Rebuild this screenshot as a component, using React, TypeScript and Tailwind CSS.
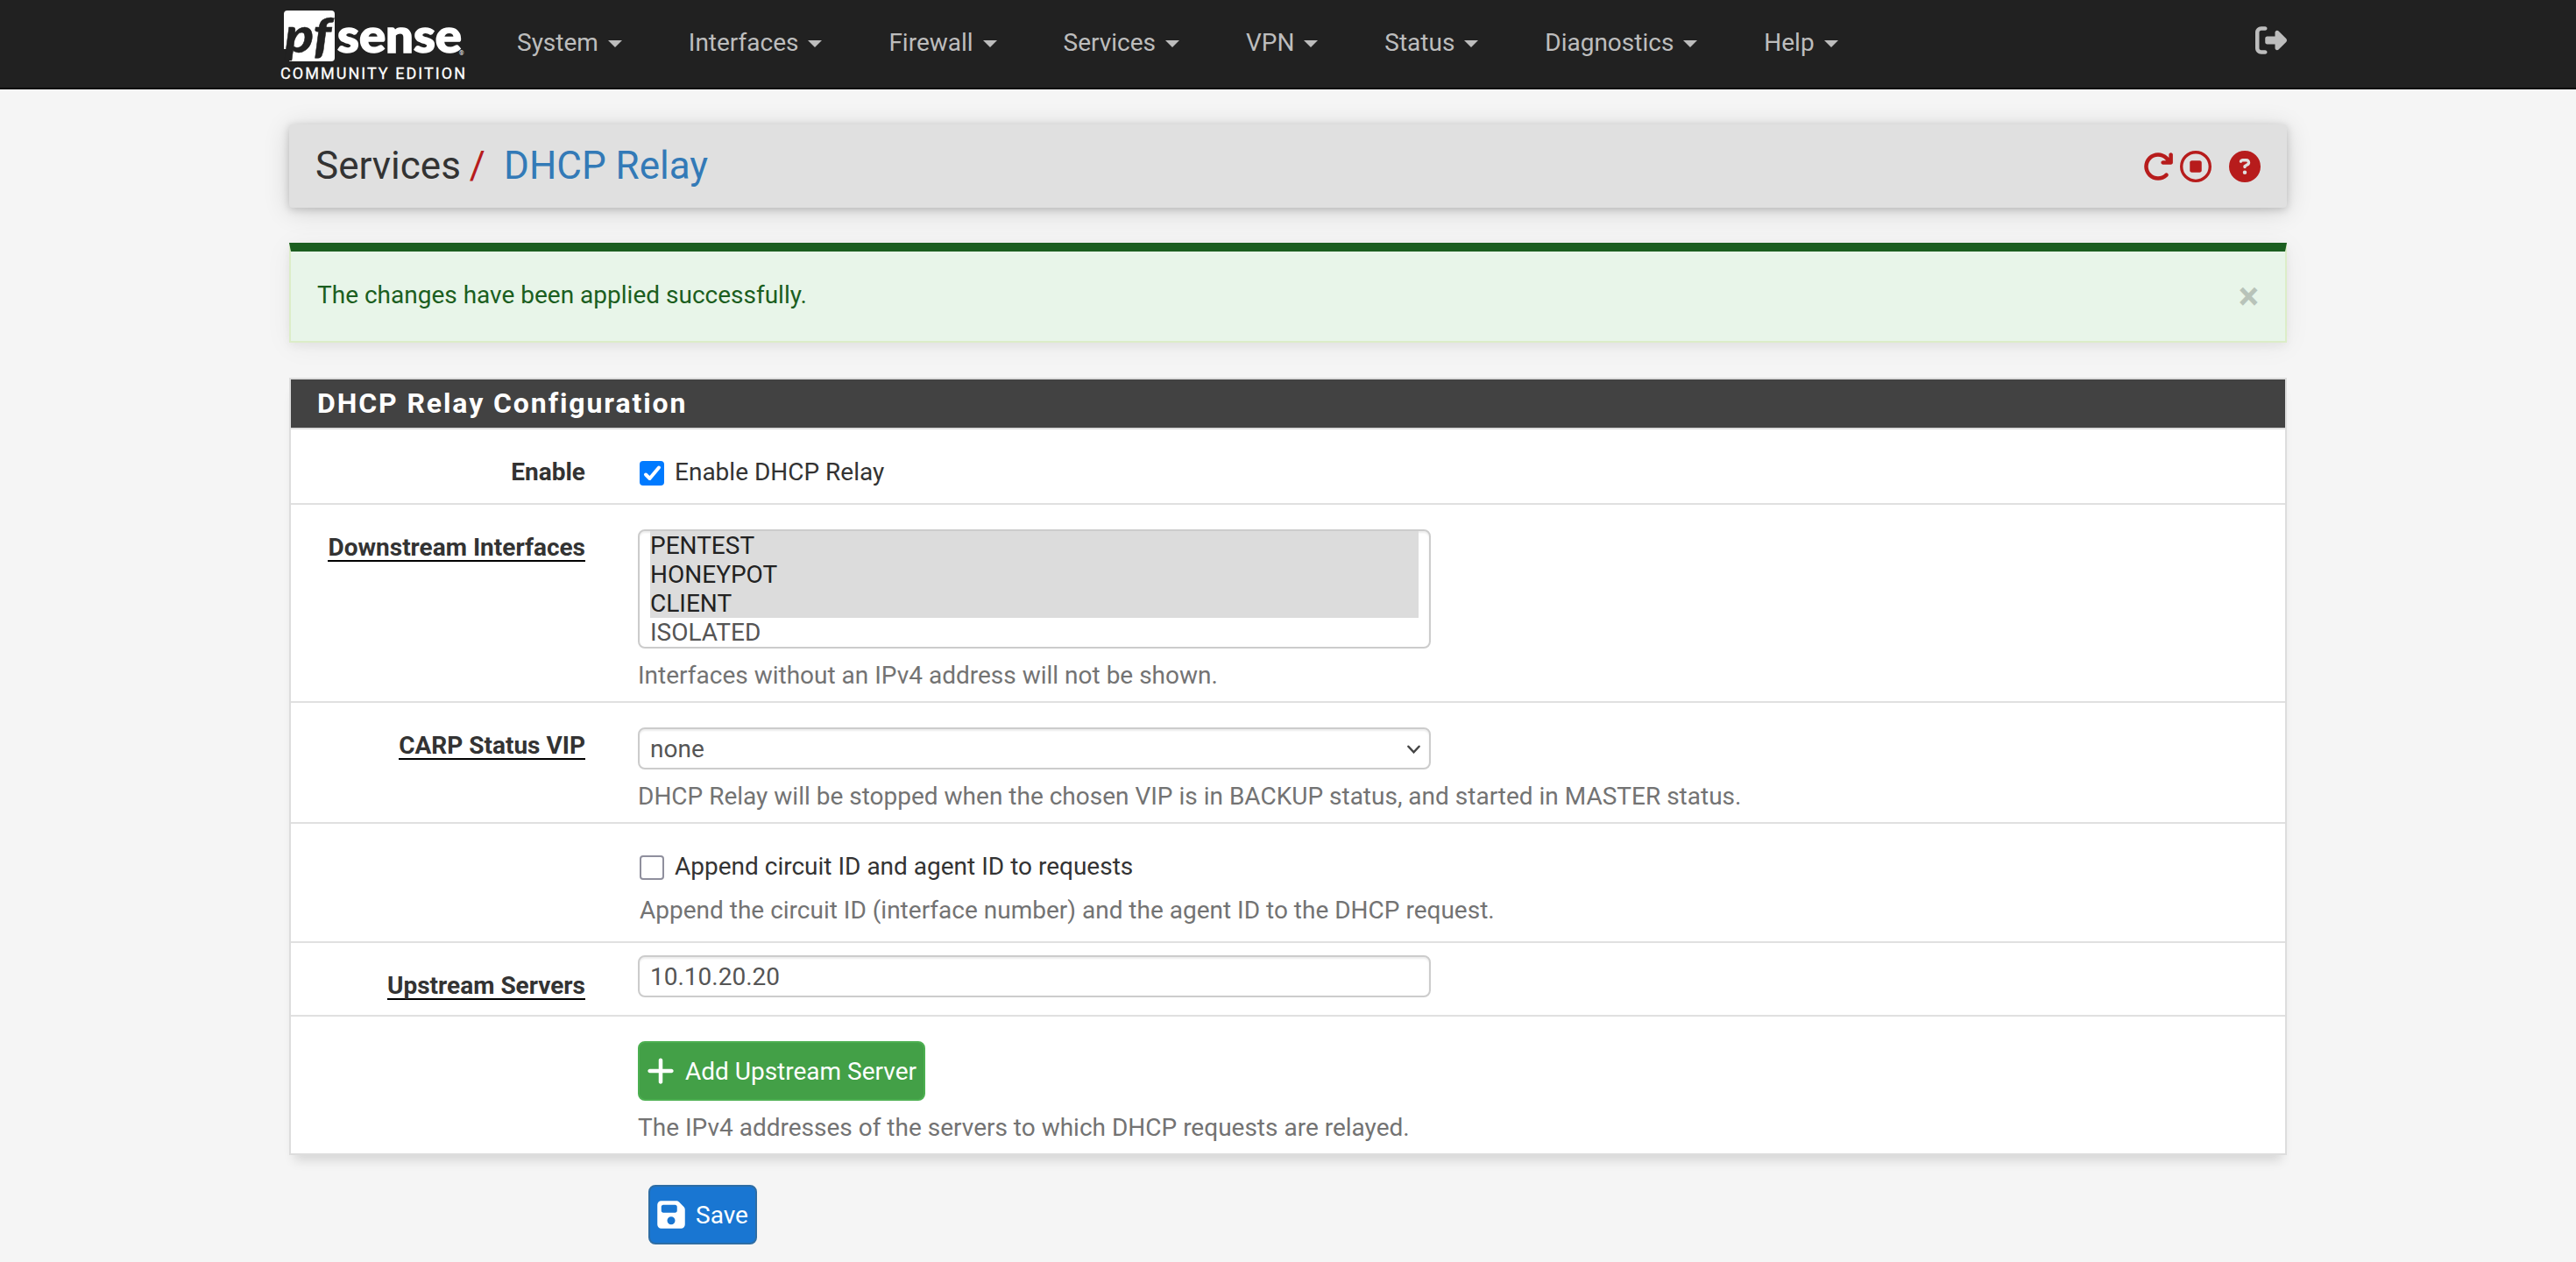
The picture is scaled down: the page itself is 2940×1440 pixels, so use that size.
import type { ReactNode } from "react";
import {
  FaArrowRotateRight,
  FaCircleQuestion,
  FaFloppyDisk,
  FaPlus,
  FaRegCircleStop,
  FaRightFromBracket,
} from "react-icons/fa6";

const menus = ["System", "Interfaces", "Firewall", "Services", "VPN", "Status", "Diagnostics", "Help"];

const interfaces = [
  { name: "PENTEST", selected: true },
  { name: "HONEYPOT", selected: true },
  { name: "CLIENT", selected: true },
  { name: "ISOLATED", selected: false },
];

const Logo = () => (
  <svg width="230" height="100" viewBox="310 0 230 100" className="block shrink-0">
    <path d="M328 12H378Q382 12 382 16V66Q382 70 378 70H330L334 56H324V16Q324 12 328 12Z" fill="#fff" />
    <text x="325" y="59.5" fontFamily="Lato" fontWeight="900" fontStyle="italic" fontSize="56" textLength="53" lengthAdjust="spacingAndGlyphs" fill="#212121" stroke="#212121" strokeWidth="0.5">
      pf
    </text>
    <text x="385" y="59.5" fontFamily="Lato" fontWeight="900" fontSize="54" textLength="142" lengthAdjust="spacingAndGlyphs" fill="#fff" stroke="#fff" strokeWidth="1.6">
      sense
    </text>
    <text x="524" y="63" fontFamily="Roboto" fontSize="7" fill="#fff">
      ®
    </text>
    <text x="320" y="90" fontFamily="Roboto" fontSize="18" textLength="211" fill="#fff" stroke="#fff" strokeWidth="0.3">
      COMMUNITY EDITION
    </text>
  </svg>
);

const Navbar = () => (
  <nav className="h-[102px] bg-[#212121] border-b-2 border-[#080808]">
    <div className="w-[2300px] h-[100px] mx-auto -translate-x-[10px] flex">
      <Logo />
      <ul className="flex ml-[50px] pt-[29px] gap-[75.9px] text-[#bdbdbd]">
        {menus.map((menu) => (
          <li key={menu} className="flex h-10 leading-10">
            {menu}
            <span className="ml-[11px] mt-[17px] w-0 h-0 border-x-8 border-t-8 border-x-transparent border-t-[#bdbdbd]" />
          </li>
        ))}
      </ul>
      <FaRightFromBracket className="ml-auto mt-[28px] size-9 text-[#bdbdbd]" />
    </div>
  </nav>
);

const Label = ({ children, required }: { children?: ReactNode; required?: boolean }) => (
  <div className="w-[336px] mr-[60px] pt-[29px] flex justify-end shrink-0 font-bold leading-10">
    {required ? <span className="h-9 border-b-2 border-black">{children}</span> : children}
  </div>
);

const Help = ({ children }: { children: ReactNode }) => <p className="mt-[11px] leading-10 text-[#737373]">{children}</p>;

const control = "w-[905px] border-2 border-[#ccc] rounded-lg bg-white px-3 text-[#555] shadow-[inset_0_2px_2px_rgba(0,0,0,0.075)]";

const App = () => {
  return (
    <div className="h-[1440px] overflow-hidden bg-[#f5f5f5] text-[28px] text-[#333] font-['Roboto',sans-serif]">
      <Navbar />
      <main className="w-[2280px] mx-auto">
        <header className="mt-10 h-[95px] pl-[30px] pr-[30px] flex items-center bg-[#e0e0e0] rounded-[4px] shadow-[0_2px_10px_rgba(0,0,0,0.18),0_4px_30px_rgba(0,0,0,0.14)]">
          <h1 className="-mt-0.5 text-[44px] leading-[60px] flex">
            <span>Services</span>
            <span className="ml-[10px] text-[#b71c1c]">/</span>
            <span className="ml-[21px] text-[#337ab7]">DHCP Relay</span>
          </h1>
          <div className="ml-auto mt-px flex text-[#b71c1c]">
            <FaArrowRotateRight className="size-9" />
            <FaRegCircleStop className="size-9 ml-[7px]" />
            <FaCircleQuestion className="size-9 ml-5" />
          </div>
        </header>

        <div className="mt-10 h-[114px] flex border-2 border-t-[10px] border-[#dcedc8] border-t-[#1b5e20] bg-[#e8f5e9] px-[30px] pt-[30px] leading-10 text-[#1b5e20] shadow-[0_4px_10px_rgba(0,0,0,0.05),0_4px_30px_rgba(0,0,0,0.05)]">
          The changes have been applied successfully.
          <button className="ml-auto h-[42px] text-[44px] leading-[41px] font-bold text-black opacity-20">×</button>
        </div>

        <section className="mt-10 border-2 border-[#ddd] bg-white shadow-[0_12px_12px_-6px_rgba(0,0,0,0.13)]">
          <h2 className="h-[57px] pl-[30px] leading-[55px] bg-[#424242] border-b-2 border-[#ddd] text-[32px] font-bold tracking-[1.9px] text-white">
            DHCP Relay Configuration
          </h2>

          <div className="flex h-[86px] border-b-2 border-[#e0e0e0]">
            <Label>Enable</Label>
            <label className="flex pt-[29px] leading-10">
              <span className="mt-[7px] ml-0.5 mr-3 size-7 rounded-[4px] bg-[#007aff]">
                <svg viewBox="0 0 28 28" className="size-7 fill-none stroke-white stroke-4">
                  <path d="M7 15.5L11.5 20L22 7.5" strokeLinecap="round" strokeLinejoin="round" />
                </svg>
              </span>
              Enable DHCP Relay
            </label>
          </div>

          <div className="flex h-[226px] border-b-2 border-[#e0e0e0]">
            <Label required>Downstream Interfaces</Label>
            <div className="pt-7">
              <ul className={`${control} h-[136px] leading-[33px]`}>
                {interfaces.map((item) => (
                  <li key={item.name} className={item.selected ? "bg-[#dcdcdc] text-[#222]" : ""}>
                    {item.name}
                  </li>
                ))}
              </ul>
              <Help>Interfaces without an IPv4 address will not be shown.</Help>
            </div>
          </div>

          <div className="flex h-[138px] border-b-2 border-[#e0e0e0]">
            <Label required>CARP Status VIP</Label>
            <div className="pt-7">
              <div className={`${control} h-12 leading-[46px] flex justify-between`}>
                none
                <svg viewBox="0 0 16 10" className="w-[15px] h-[10px] mt-[18px] -mr-0.5 fill-none stroke-[#444]">
                  <path d="M1.5 1.5L8 8.5L14.5 1.5" strokeWidth="2.6" strokeLinecap="round" />
                </svg>
              </div>
              <Help>DHCP Relay will be stopped when the chosen VIP is in BACKUP status, and started in MASTER status.</Help>
            </div>
          </div>

          <div className="flex h-[136px] border-b-2 border-[#e0e0e0]">
            <Label />
            <div className="pt-[29px] pl-0.5">
              <label className="flex leading-10">
                <span className="mt-[7px] mr-3 size-7 rounded-[4px] border-2 border-[#8f8f9d] bg-white" />
                Append circuit ID and agent ID to requests
              </label>
              <p className="mt-[10px] leading-10 text-[#737373]">
                Append the circuit ID (interface number) and the agent ID to the DHCP request.
              </p>
            </div>
          </div>

          <div className="flex h-[84px] border-b-2 border-[#e0e0e0]">
            <Label required>Upstream Servers</Label>
            <div className="pt-[14px]">
              <div className={`${control} h-12 leading-[46px]`}>10.10.20.20</div>
            </div>
          </div>

          <div className="flex h-[156px]">
            <Label />
            <div className="pt-7">
              <button className="flex items-center w-[328px] h-[68px] pl-[6px] border-2 border-[#4caf50] rounded-lg bg-[#43a047] text-white leading-10">
                <FaPlus className="size-9 mr-[10px]" />
                <span className="pt-0.5 whitespace-nowrap">Add Upstream Server</span>
              </button>
              <Help>The IPv4 addresses of the servers to which DHCP requests are relayed.</Help>
            </div>
          </div>
        </section>

        <button className="mt-[34px] ml-[410px] flex items-center w-[124px] h-[68px] pl-[6px] border-2 border-[#2e6da4] rounded-lg bg-[#1976d2] text-white leading-10">
          <FaFloppyDisk className="size-9 mr-[10px]" />
          <span className="pt-0.5">Save</span>
        </button>
      </main>
    </div>
  );
};

export default App;
